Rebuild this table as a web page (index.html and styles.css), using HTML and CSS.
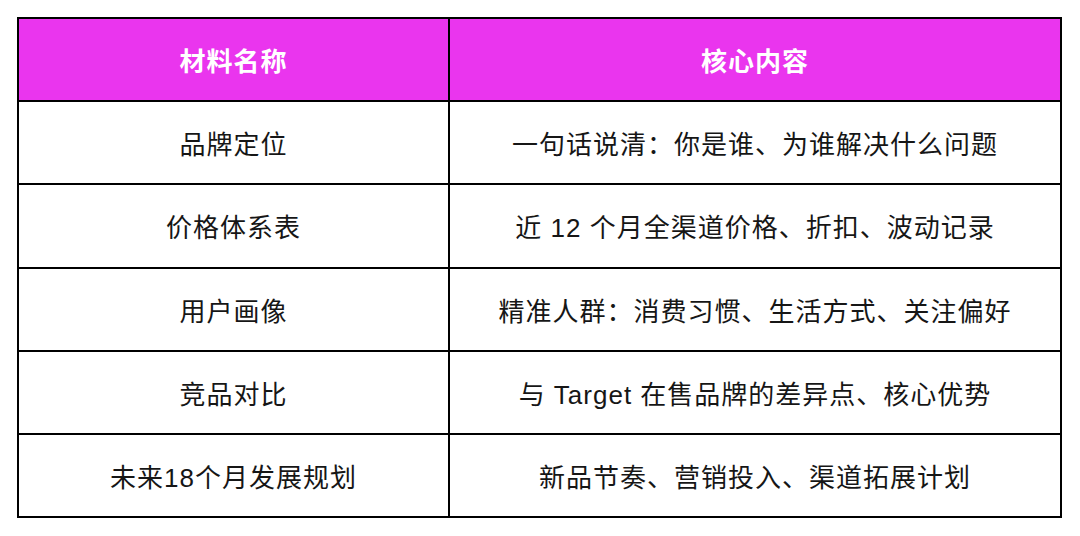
FILE: index.html
```html
<!DOCTYPE html>
<html lang="zh-CN">
<head>
<meta charset="utf-8">
<link rel="stylesheet" href="styles.css">
</head>
<body>
<table class="materials">
  <colgroup>
    <col class="col-name">
    <col class="col-content">
  </colgroup>
  <thead>
    <tr>
      <th>材料名称</th>
      <th>核心内容</th>
    </tr>
  </thead>
  <tbody>
    <tr><td>品牌定位</td><td>一句话说清：你是谁、为谁解决什么问题</td></tr>
    <tr><td>价格体系表</td><td>近 12 个月全渠道价格、折扣、波动记录</td></tr>
    <tr><td>用户画像</td><td>精准人群：消费习惯、生活方式、关注偏好</td></tr>
    <tr><td>竞品对比</td><td>与 Target 在售品牌的差异点、核心优势</td></tr>
    <tr><td>未来18个月发展规划</td><td>新品节奏、营销投入、渠道拓展计划</td></tr>
  </tbody>
</table>
</body>
</html>
```

FILE: styles.css
```css
html, body {
  margin: 0;
  padding: 0;
  background: #ffffff;
}

body {
  padding: 17px 0 0 17px;
  font-family: "Liberation Sans", "Noto Sans CJK SC", sans-serif;
}

.materials {
  border-collapse: collapse;
  width: 1045px;
  table-layout: fixed;
}

.col-name {
  width: 431px;
}

.materials th,
.materials td {
  border: 2px solid #000;
  text-align: center;
  vertical-align: middle;
  font-size: 26px;
  letter-spacing: 1px;
  padding: 0;
  color: #161616;
}

.materials th {
  background: #ea35ee;
  color: #ffffff;
  font-weight: 700;
  height: 81.2px;
}

.materials td {
  height: 81.2px;
  font-weight: 400;
}
```
